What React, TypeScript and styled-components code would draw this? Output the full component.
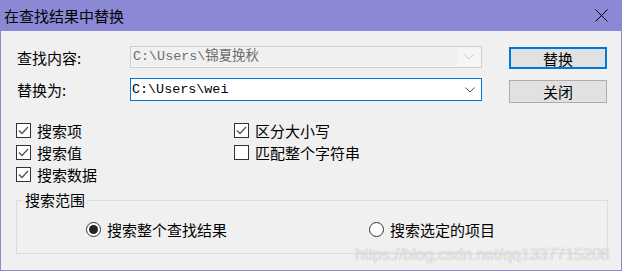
import styled, { createGlobalStyle } from "styled-components";

const GlobalStyle = createGlobalStyle`
  html, body {
    margin: 0;
    padding: 0;
    background: #f0f0f0;
  }
  * {
    box-sizing: border-box;
  }
`;

const uiFont = `"Noto Sans CJK SC", "Liberation Sans", sans-serif`;

const Window = styled.div`
  position: relative;
  width: 622px;
  height: 271px;
  border: 1px solid #8b89d6;
  border-top: none;
  background: #f0f0f0;
  display: flex;
  flex-direction: column;
  font-family: ${uiFont};
  font-size: 15px;
  color: #000;
  overflow: hidden;
`;

const TitleBar = styled.div`
  height: 31px;
  flex-shrink: 0;
  background: #8b89d6;
  display: flex;
  align-items: center;
  justify-content: space-between;
  padding: 0 12px 0 3px;
`;

const Title = styled.span`
  font-size: 15px;
  line-height: 1;
  color: #000;
`;

const CloseButton = styled.button`
  width: 16px;
  height: 16px;
  padding: 0;
  border: none;
  background: transparent;
  display: flex;
  align-items: center;
  justify-content: center;
`;

const Body = styled.div`
  flex: 1;
  display: flex;
  flex-direction: column;
  padding: 15px 14px 0 15px;
`;

const FormGrid = styled.div`
  display: grid;
  grid-template-columns: 114px 352px 27px 98px;
  grid-template-rows: 22px 23px;
  row-gap: 10px;
  align-items: center;
`;

const Label = styled.label`
  grid-column: 1;
  line-height: 1;
  padding-left: 1px;
`;

const Combo = styled.div<{ $disabled?: boolean }>`
  grid-column: 2;
  align-self: stretch;
  display: flex;
  border: 1px solid ${(p) => (p.$disabled ? "#cccccc" : "#0078d7")};
  background: ${(p) => (p.$disabled ? "#f6f6f6" : "#ffffff")};
  padding: ${(p) => (p.$disabled ? "1px" : "0")};
`;

const ComboText = styled.div<{ $disabled?: boolean }>`
  flex: 1;
  display: flex;
  align-items: center;
  padding-left: 1px;
  background: ${(p) => (p.$disabled ? "#f0f0f0" : "transparent")};
  color: ${(p) => (p.$disabled ? "#6d6d6d" : "#000")};
  font-family: "Liberation Mono", "DejaVu Sans Mono", "Noto Sans CJK SC", monospace;
  font-size: 13.4px;
  line-height: 1;
  white-space: pre;
`;

const ComboArrow = styled.div`
  width: 22px;
  display: flex;
  align-items: center;
  justify-content: center;
`;

const Button = styled.button<{ $default?: boolean }>`
  grid-column: 4;
  height: ${(p) => (p.$default ? "22px" : "23px")};
  margin-top: ${(p) => (p.$default ? "2px" : "3px")};
  border: ${(p) => (p.$default ? "2px solid #0078d7" : "1px solid #adadad")};
  background: #e1e1e1;
  font-family: ${uiFont};
  font-size: 15px;
  line-height: 1;
  color: #000;
  padding: 0;
  display: flex;
  align-items: center;
  justify-content: center;
`;

const CheckGrid = styled.div`
  display: grid;
  grid-template-columns: 218px 1fr;
  grid-template-rows: repeat(3, 22px);
  grid-auto-flow: column;
  margin-top: 18px;
`;

const CheckItem = styled.label`
  display: flex;
  align-items: center;
  gap: 6px;
  line-height: 1;
`;

const Box = styled.span`
  width: 15px;
  height: 15px;
  border: 1px solid #333;
  background: #fff;
  display: flex;
  align-items: center;
  justify-content: center;
`;

const GroupBox = styled.fieldset`
  margin: 6px 0 0 0;
  padding: 0;
  width: 592px;
  height: 63px;
  border: 1px solid #dcdcdc;
`;

const Legend = styled.legend`
  margin-left: 6px;
  padding: 0 2px;
  font-size: 15px;
  line-height: 18px;
`;

const RadioRow = styled.div`
  display: grid;
  grid-template-columns: 283px 1fr;
  padding: 13px 0 0 69px;
`;

const RadioItem = styled.label`
  display: flex;
  align-items: center;
  gap: 6px;
  line-height: 1;
`;

const RadioCircle = styled.span<{ $checked?: boolean }>`
  width: 15px;
  height: 15px;
  border-radius: 50%;
  border: 1px solid #333;
  background: #fff;
  display: flex;
  align-items: center;
  justify-content: center;

  &::after {
    content: "";
    display: ${(p) => (p.$checked ? "block" : "none")};
    width: 9px;
    height: 9px;
    border-radius: 50%;
    background: #222;
  }
`;

const Watermark = styled.div`
  position: absolute;
  right: 11px;
  bottom: 7px;
  font-family: "Liberation Sans", Arial, sans-serif;
  font-size: 16px;
  line-height: 1;
  color: rgba(255, 255, 255, 0.75);
  text-shadow: 0 0 1px rgba(0, 0, 0, 0.35);
  pointer-events: none;
`;

const Chevron = ({ color }: { color: string }) => (
  <svg width="10" height="6" viewBox="0 0 10 6">
    <polyline points="0.5,0.5 5,5 9.5,0.5" fill="none" stroke={color} strokeWidth="1" />
  </svg>
);

const Check = () => (
  <svg width="11" height="9" viewBox="0 0 11 9">
    <polyline points="1,4.5 4,7.5 10,1" fill="none" stroke="#555" strokeWidth="1.3" />
  </svg>
);

const checks = [
  { label: "搜索项", checked: true },
  { label: "搜索值", checked: true },
  { label: "搜索数据", checked: true },
  { label: "区分大小写", checked: true },
  { label: "匹配整个字符串", checked: false },
];

export default function App() {
  return (
    <>
      <GlobalStyle />
      <Window>
        <TitleBar>
          <Title>在查找结果中替换</Title>
          <CloseButton>
            <svg width="13" height="13" viewBox="0 0 13 13">
              <path d="M0.5 0.5 L12.5 12.5 M12.5 0.5 L0.5 12.5" stroke="#000" strokeWidth="1" />
            </svg>
          </CloseButton>
        </TitleBar>
        <Body>
          <FormGrid>
            <Label>查找内容:</Label>
            <Combo $disabled>
              <ComboText $disabled>{"C:\\Users\\锦夏挽秋"}</ComboText>
              <ComboArrow>
                <Chevron color="#c4c4c4" />
              </ComboArrow>
            </Combo>
            <Button $default style={{ gridRow: 1 }}>
              替换
            </Button>
            <Label>替换为:</Label>
            <Combo>
              <ComboText>{"C:\\Users\\wei"}</ComboText>
              <ComboArrow>
                <Chevron color="#505050" />
              </ComboArrow>
            </Combo>
            <Button style={{ gridRow: 2 }}>关闭</Button>
          </FormGrid>

          <CheckGrid>
            {checks.map((c) => (
              <CheckItem key={c.label}>
                <Box>{c.checked && <Check />}</Box>
                {c.label}
              </CheckItem>
            ))}
          </CheckGrid>

          <GroupBox>
            <Legend>搜索范围</Legend>
            <RadioRow>
              <RadioItem>
                <RadioCircle $checked />
                搜索整个查找结果
              </RadioItem>
              <RadioItem>
                <RadioCircle />
                搜索选定的项目
              </RadioItem>
            </RadioRow>
          </GroupBox>
        </Body>
        <Watermark>https://blog.csdn.net/qq1337715208</Watermark>
      </Window>
    </>
  );
}
